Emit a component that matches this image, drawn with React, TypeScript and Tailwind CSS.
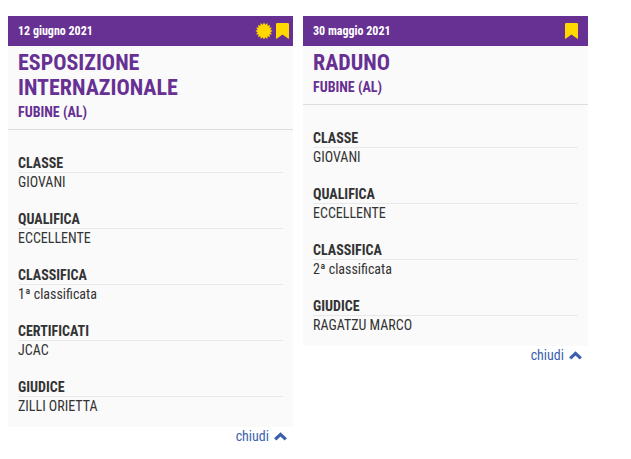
type Entry = { label: string; value: string };

type Show = {
  date: string;
  title: string;
  place: string;
  certificate: boolean;
  entries: Entry[];
};

const shows: Show[] = [
  {
    date: "12 giugno 2021",
    title: "ESPOSIZIONE INTERNAZIONALE",
    place: "FUBINE (AL)",
    certificate: true,
    entries: [
      { label: "CLASSE", value: "GIOVANI" },
      { label: "QUALIFICA", value: "ECCELLENTE" },
      { label: "CLASSIFICA", value: "1ª classificata" },
      { label: "CERTIFICATI", value: "JCAC" },
      { label: "GIUDICE", value: "ZILLI ORIETTA" },
    ],
  },
  {
    date: "30 maggio 2021",
    title: "RADUNO",
    place: "FUBINE (AL)",
    certificate: false,
    entries: [
      { label: "CLASSE", value: "GIOVANI" },
      { label: "QUALIFICA", value: "ECCELLENTE" },
      { label: "CLASSIFICA", value: "2ª classificata" },
      { label: "GIUDICE", value: "RAGATZU MARCO" },
    ],
  },
];

// 16 pointed seal
const sealPoints = Array.from({ length: 32 }, (_, i) => {
  const r = i % 2 === 0 ? 8.6 : 6.4;
  const a = (i * Math.PI) / 16;
  return `${(8 + r * Math.sin(a)).toFixed(2)},${(8 - r * Math.cos(a)).toFixed(2)}`;
}).join(" ");

function SealIcon() {
  return (
    <svg viewBox="0 0 16 16" className="size-4 overflow-visible" fill="currentColor" aria-hidden="true">
      <polygon points={sealPoints} />
    </svg>
  );
}

function BookmarkIcon() {
  return (
    <svg viewBox="0 0 13 16" className="h-4 w-[13px]" fill="currentColor" aria-hidden="true">
      <path d="M1.2 0h10.6Q13 0 13 1.2V15.2Q13 16.2 12 15.6L6.5 11.4 1 15.6Q0 16.2 0 15.2V1.2Q0 0 1.2 0Z" />
    </svg>
  );
}

function ChevronUpIcon() {
  return (
    <svg viewBox="0 0 13 9" className="h-[9px] w-[13px]" fill="none" stroke="currentColor" strokeWidth="3.2" aria-hidden="true">
      <path d="M1.2 7.4 6.5 2.4 11.8 7.4" />
    </svg>
  );
}

function ShowCard({ show }: { show: Show }) {
  return (
    <div className="min-w-0 flex-1">
      <article className="bg-[#fafafa] pb-[11px]">
        <header
          className={`flex h-[30px] items-center justify-between bg-[#673093] pl-2.5 text-white ${
            show.certificate ? "pr-1" : "pr-2.5"
          }`}
        >
          <time className="text-xs leading-5 font-bold">{show.date}</time>
          <span className="flex gap-1 text-[#ffd800]">
            {show.certificate && <SealIcon />}
            <BookmarkIcon />
          </span>
        </header>
        <div className="border-b border-[#dddddd] px-2.5 py-1 text-[#673093]">
          <h2 className="text-[22px] leading-[25px] font-bold">{show.title}</h2>
          <p className="text-sm leading-[25px] font-bold">{show.place}</p>
        </div>
        <dl className="flex flex-col gap-[18px] px-2.5 pt-6">
          {show.entries.map((entry) => (
            <div key={entry.label}>
              <dt className="border-b border-[#e9e9e9] leading-[18px] font-bold">{entry.label}</dt>
              <dd className="leading-[19px]">{entry.value}</dd>
            </div>
          ))}
        </dl>
      </article>
      <div className="flex justify-end pr-1.5">
        <button type="button" className="flex cursor-pointer items-center gap-[5px] leading-[18px] text-[#3b5fae]">
          chiudi
          <ChevronUpIcon />
        </button>
      </div>
    </div>
  );
}

export default function App() {
  return (
    <main className="flex min-h-screen items-start gap-2.5 bg-white pt-4 pr-[43px] pl-2 font-['Roboto_Condensed','Liberation_Sans_Narrow','Roboto',sans-serif] text-sm text-[#333333]">
      {shows.map((show) => (
        <ShowCard key={show.date} show={show} />
      ))}
    </main>
  );
}
